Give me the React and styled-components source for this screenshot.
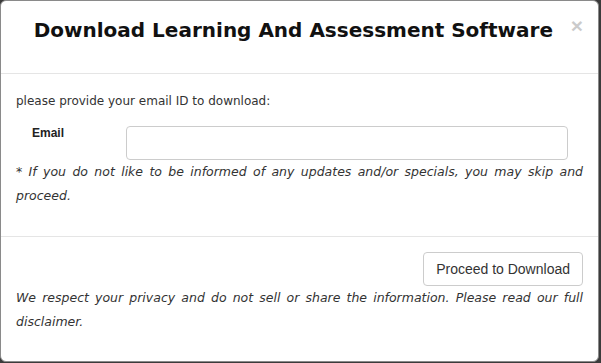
import styled, { createGlobalStyle } from 'styled-components'

const GlobalStyle = createGlobalStyle`
  html, body {
    margin: 0;
    padding: 0;
    background: #3b3b3b;
    height: 100%;
    overflow: hidden;
  }
  * { box-sizing: border-box; }
`

const Modal = styled.div`
  width: 599px;
  height: 362px;
  background: #fff;
  border: 1px solid #8a8a8a;
  border-radius: 6px;
  overflow: hidden;
  font-family: "DejaVu Sans", Verdana, sans-serif;
  color: #333;
`

const Header = styled.div`
  height: 73px;
  padding: 14px 15px 0 15px;
  display: flex;
  align-items: flex-start;
  border-bottom: 1px solid #e5e5e5;
`

const Title = styled.h4`
  flex: 1;
  margin: 0;
  text-align: center;
  font-size: 20px;
  line-height: 30px;
  font-weight: bold;
  color: #111;
`

const Close = styled.button`
  border: 0;
  background: none;
  padding: 0;
  font-family: "Liberation Sans", Arial, sans-serif;
  font-size: 21px;
  font-weight: bold;
  line-height: 21px;
  color: #000;
  opacity: 0.2;
  cursor: pointer;
`

const Body = styled.div`
  padding: 15px 15px 28px 15px;
  border-bottom: 1px solid #e5e5e5;
`

const Text = styled.p`
  margin: 0;
  font-size: ${p => (p.$italic ? '12.5px' : '12px')};
  line-height: 24px;
  font-style: ${p => (p.$italic ? 'italic' : 'normal')};
  text-align: ${p => (p.$italic ? 'justify' : 'left')};
`

const FormRow = styled.div`
  display: grid;
  grid-template-columns: 110px 1fr;
  align-items: start;
  margin: 13px 15px 0 0;
`

const Label = styled.label`
  padding-left: 16px;
  font-family: "Liberation Sans", Arial, sans-serif;
  font-size: 12px;
  font-weight: bold;
  line-height: 14px;
  color: #222;
`

const Input = styled.input`
  width: 100%;
  height: 34px;
  border: 1px solid #ccc;
  border-radius: 4px;
  padding: 6px 12px;
  font-size: 14px;
  outline: none;
`

const Footer = styled.div`
  padding: 15px 15px 0 15px;
`

const Actions = styled.div`
  display: flex;
  justify-content: flex-end;
`

const Button = styled.button`
  height: 34px;
  padding: 6px 12px;
  background: #fff;
  border: 1px solid #ccc;
  border-radius: 4px;
  font-family: "Liberation Sans", Arial, sans-serif;
  font-size: 14px;
  line-height: 20px;
  color: #333;
  cursor: pointer;
`

export default function App() {
  return (
    <>
      <GlobalStyle />
      <Modal>
        <Header>
          <Title>Download Learning And Assessment Software</Title>
          <Close aria-label="Close">×</Close>
        </Header>
        <Body>
          <Text>please provide your email ID to download:</Text>
          <FormRow>
            <Label htmlFor="email">Email</Label>
            <Input id="email" type="email" />
          </FormRow>
          <Text $italic>
            * If you do not like to be informed of any updates and/or specials, you may skip and proceed.
          </Text>
        </Body>
        <Footer>
          <Actions>
            <Button>Proceed to Download</Button>
          </Actions>
          <Text $italic>
            We respect your privacy and do not sell or share the information. Please read our full disclaimer.
          </Text>
        </Footer>
      </Modal>
    </>
  )
}
